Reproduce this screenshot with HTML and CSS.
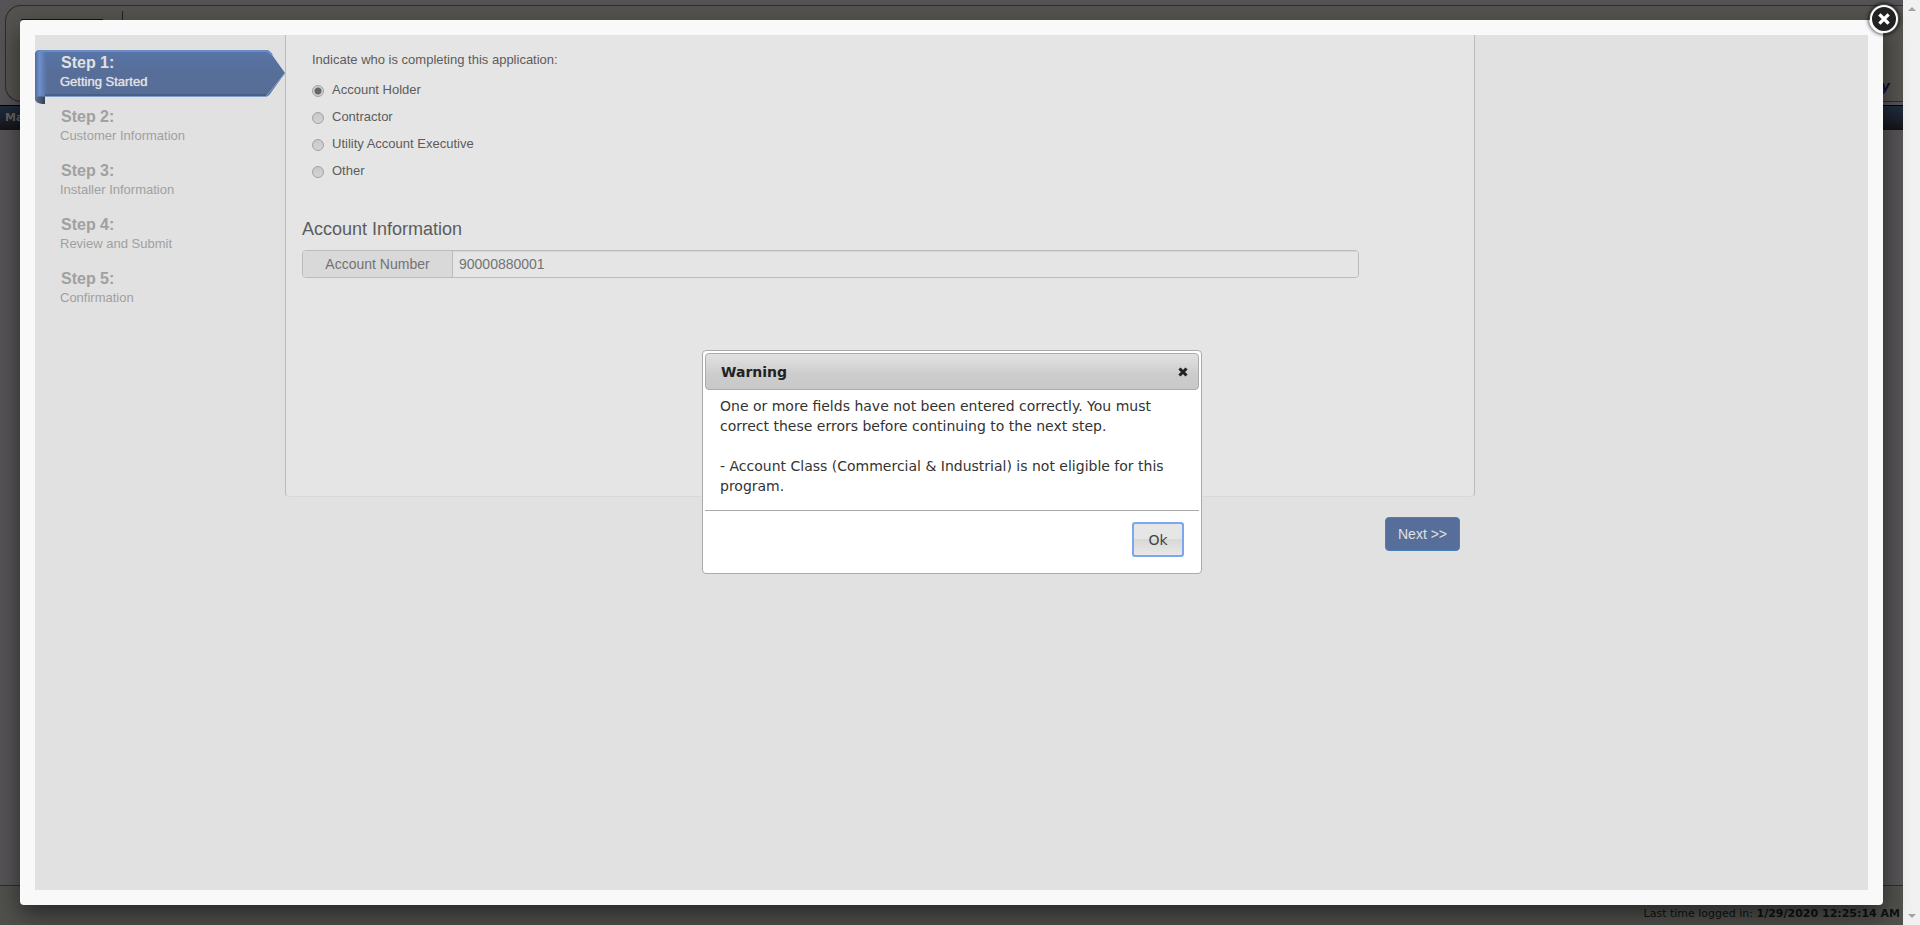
FILE: index.html
```html
<!DOCTYPE html>
<html lang="en">
<head>
<meta charset="utf-8">
<title>Application</title>
<link rel="stylesheet" href="styles.css">
</head>
<body>
<div class="backdrop">
  <div class="site">
    <header class="site-head"><span class="logo"></span><span class="rule-v"></span><span class="head-tail">y</span></header>
    <nav class="site-nav"><a href="#">Ma</a></nav>
    <div class="site-body"></div>
    <footer class="site-foot"><p>Logged<br>Last time logged in: <b>1/29/2020 12:25:14 AM</b></p></footer>
  </div>
  <div class="scrollbar"><span class="up"></span><span class="down"></span></div>
</div>

<div class="lightbox">
  <button class="lightbox-close" type="button" aria-label="Close">
    <svg viewBox="0 0 30 30"><circle cx="15" cy="15" r="13" fill="#222" stroke="#fff" stroke-width="2"/><path d="M11.500 11.500l7 7M18.500 11.500l-7 7" stroke="#fff" stroke-width="3.200" stroke-linecap="square"/></svg>
  </button>
  <main class="wizard">
    <ol class="steps">
      <li class="step active">
        <svg class="ribbon" viewBox="0 0 250 54" aria-hidden="true">
          <defs>
            <linearGradient id="rb" x1="0" y1="0" x2="0" y2="1"><stop offset="0" stop-color="#5975a8"/><stop offset=".45" stop-color="#566e99"/><stop offset="1" stop-color="#566d96"/></linearGradient>
            <linearGradient id="roll" x1="0" y1="0" x2="1" y2="0"><stop offset="0" stop-color="#4f6da5"/><stop offset=".35" stop-color="#7090c8"/><stop offset=".75" stop-color="#5b78ad"/><stop offset="1" stop-color="#5771a1" stop-opacity="0"/></linearGradient>
            <linearGradient id="fold" x1="0" y1="0" x2="1" y2="0"><stop offset="0" stop-color="#5f7395"/><stop offset="1" stop-color="#353f52"/></linearGradient>
          </defs>
          <path d="M0 49Q1 46 5 46H10V54H7Q0 53 0 49z" fill="url(#fold)"/>
          <path d="M0 5Q0 0 5 0H231Q233 0 235 2L250 23L235 44Q233 47 230 47H6Q1 47 0 50z" fill="url(#rb)"/>
          <path d="M0 5Q0 0 5 0H13V46H6Q1 46 0 50z" fill="url(#roll)"/>
          <path d="M4 1H231Q234 1 237 5" fill="none" stroke="#6b8bc6" stroke-width="2"/>
          <path d="M10 45H231" stroke="#4a5f87" stroke-width="2"/>
          <path d="M10 46.500H231L250 23" fill="none" stroke="#819dcc"/>
        </svg>
        <h2>Step 1:</h2><p>Getting Started</p>
      </li>
      <li class="step"><h2>Step 2:</h2><p>Customer Information</p></li>
      <li class="step"><h2>Step 3:</h2><p>Installer Information</p></li>
      <li class="step"><h2>Step 4:</h2><p>Review and Submit</p></li>
      <li class="step"><h2>Step 5:</h2><p>Confirmation</p></li>
    </ol>
    <form class="content">
      <section class="panel">
        <fieldset class="who">
          <legend>Indicate who is completing this application:</legend>
          <label><input type="radio" name="who" checked><span>Account Holder</span></label>
          <label><input type="radio" name="who"><span>Contractor</span></label>
          <label><input type="radio" name="who"><span>Utility Account Executive</span></label>
          <label><input type="radio" name="who"><span>Other</span></label>
        </fieldset>
        <h3>Account Information</h3>
        <div class="input-group">
          <label for="acct">Account Number</label>
          <input id="acct" type="text" value="90000880001">
        </div>
      </section>
      <div class="actions"><button class="next" type="button">Next &gt;&gt;</button></div>
    </form>
  </main>
</div>

<div class="dialog" role="dialog" aria-labelledby="dlg-title">
  <div class="dialog-title">
    <h2 id="dlg-title">Warning</h2>
    <button type="button" aria-label="Close dialog"><svg viewBox="0 0 10 10"><path d="M2.500 2.500l5 5M7.500 2.500l-5 5" stroke="#222" stroke-width="3" stroke-linecap="square"/></svg></button>
  </div>
  <div class="dialog-text">
    <p>One or more fields have not been entered correctly. You must correct these errors before continuing to the next step.</p>
    <p>- Account Class (Commercial &amp; Industrial) is not eligible for this program.</p>
  </div>
  <div class="dialog-buttons"><button type="button">Ok</button></div>
</div>
</body>
</html>
```
FILE: styles.css
```css
* { box-sizing: border-box; }
html, body { height: 100%; }
body { margin: 0; overflow: hidden; font-family: "Liberation Sans", Arial, sans-serif; font-size: 13px; color: #5c5c5c; }
h2, h3, p, ol { margin: 0; padding: 0; }
button { font-family: inherit; cursor: pointer; }

.backdrop { position: absolute; inset: 0; display: flex; background: #555355; }
.site { flex: 1; display: flex; flex-direction: column; min-width: 0; padding-top: 5px; font-family: "DejaVu Sans", sans-serif; }
.site-head { display: flex; gap: 19px; height: 97px; margin-left: 5px; padding: 5px 13px 5px 15px; border: 1px solid #2e2d2e; border-right: 0; border-radius: 16px 0 0 16px; background: #54534f; }
.logo { width: 82px; height: 60px; margin-top: 8px; border-top: 1px solid #1c1014; }
.rule-v { width: 1px; height: 85px; background: #222; }
.head-tail { align-self: flex-end; margin-left: auto; color: #101038; font-size: 14px; font-style: italic; font-weight: bold; line-height: 20px; }
.site-nav { height: 25px; margin-top: 3px; padding-left: 5px; border-top: 1px solid #000; background: linear-gradient(#202c3e, #1c222e 50%, #141416); }
.site-nav a { color: #66625f; font-size: 11px; font-weight: bold; line-height: 23px; text-decoration: none; }
.site-body { flex: 1; }
.site-foot { display: flex; align-items: flex-end; justify-content: flex-end; height: 40px; padding: 0 3px 4px; border-top: 1px solid #2e2d2e; background: #50504d; color: #111; font-size: 11px; line-height: 14px; }
.scrollbar { width: 17px; display: flex; flex-direction: column; justify-content: space-between; align-items: center; padding: 7px 0; background: #f1f1f1; }
.up, .down { border: 4px solid transparent; }
.up { border-top: 0; border-bottom-color: #a3a3a3; }
.down { border-bottom: 0; border-top-color: #a3a3a3; }

.lightbox { position: absolute; inset: 20px 37px 20px 20px; padding: 15px; border-radius: 4px; background: #f9f9f9; box-shadow: 0 10px 25px rgba(0,0,0,.5); }
.lightbox-close { position: absolute; top: -16px; right: -16px; width: 30px; height: 30px; padding: 0; border: 0; border-radius: 50%; background: none; box-shadow: 0 0 4px #000; }
.lightbox-close svg { display: block; }
.wizard { display: flex; height: 100%; background: #e1e1e1; }

.steps { width: 250px; padding-top: 15px; list-style: none; }
.step { position: relative; height: 54px; padding: 3px 0 0 25px; color: #a0a0a0; }
.step h2 { position: relative; padding-left: 1px; font-size: 16px; line-height: 20px; }
.step p { position: relative; font-size: 13px; line-height: 18px; }
.active { color: #e1e1e1; }
.active p { text-shadow: 0 0 1px #e1e1e1; }
.ribbon { position: absolute; top: 0; left: 0; width: 250px; height: 54px; }

.content { flex: 0 1 1190px; }
.panel { height: 462px; padding: 15px 115px 0 16px; border: 1px solid #bbb; border-top: 0; border-bottom-color: #d9d9d9; border-radius: 0 0 4px 4px; background: #e5e5e5; }
.who { margin: 0 0 30px; padding: 0 0 0 10px; border: 0; }
.who legend { height: 31px; padding: 0; line-height: 20px; }
.who label { display: flex; align-items: flex-start; gap: 8px; height: 27px; line-height: 18px; }
.who input { appearance: none; width: 12px; height: 12px; margin: 4px 0 0; border: 1px solid #a2a2a2; border-radius: 50%; background: linear-gradient(#c8c8c8, #d4d4d4); }
.who input:checked { background: radial-gradient(circle, #666 0 3px, #d0d0d0 4px); }
.panel h3 { font-size: 18px; font-weight: normal; line-height: 20px; margin-bottom: 11px; }
.input-group { display: flex; height: 28px; border: 1px solid #bbb; border-radius: 4px; overflow: hidden; font-size: 14px; color: #737373; }
.input-group label { width: 150px; border-right: 1px solid #bbb; background: #d9d9d9; text-align: center; line-height: 26px; }
.input-group input { flex: 1; min-width: 0; padding: 0 6px; border: 0; background: #e5e5e5; color: inherit; font: inherit; box-shadow: inset 0 1px 1px rgba(0,0,0,.07); }
.actions { display: flex; justify-content: flex-end; padding: 20px 15px; }
.next { width: 75px; height: 34px; padding: 0; border: 1px solid #4a80b8; border-radius: 4px; background: #566e99; color: #e1e1e1; font-size: 14px; }

.dialog { position: absolute; top: 350px; left: calc(50% - 258px); width: 500px; padding: 2px; border: 1px solid #aaa; border-radius: 4px; background: #fff; color: #333; font-family: "DejaVu Sans", Verdana, sans-serif; font-size: 14px; line-height: 20px; }
.dialog-title { display: flex; justify-content: space-between; align-items: center; height: 37px; padding: 0 10px 0 15px; border: 1px solid #aaa; border-radius: 4px; background: linear-gradient(#e2e2e2, #ccc 60%, #c9c9c9); }
.dialog-title h2 { color: #222; font-size: 14px; line-height: 20px; }
.dialog-title button { width: 10px; height: 10px; padding: 0; border: 0; background: none; }
.dialog-title svg { display: block; }
.dialog-text { padding: 6px 15px 14px; }
.dialog-text p + p { margin-top: 20px; }
.dialog-buttons { display: flex; justify-content: flex-end; height: 61px; padding: 12px 16px 0; border-top: 1px solid #aaa; }
.dialog-buttons button { width: 50px; height: 33px; padding: 0; border: 1px solid #999; border-radius: 2px; outline: 2px solid #7aa7ee; outline-offset: -1px; background: linear-gradient(#e6e6e6 50%, #d8d8d8 50%, #e8e8e8); color: #444; font-size: 14px; }
```
